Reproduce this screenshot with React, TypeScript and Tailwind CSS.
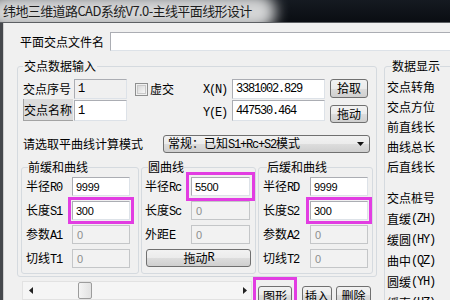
import type { ReactNode } from "react";

// Win7-ish form, fixed pixel metrics taken from the screenshot
const mono = "font-['Liberation_Mono',monospace] tracking-[-1.2px]";
const btn =
  "flex shrink-0 items-center justify-center rounded-[3px] border border-[#707070] bg-[linear-gradient(#f2f2f2,#ebebeb_50%,#dddddd_50%,#cfcfcf)] leading-none";

function Lat({ children }: { children: ReactNode }) {
  return <span className={mono}>{children}</span>;
}

function Num({ children, gray }: { children: ReactNode; gray?: boolean }) {
  return (
    <span
      className={
        gray
          ? "font-['Liberation_Sans',sans-serif] text-[11px] tracking-[-0.3px] text-[#8d8d8d]"
          : "font-['Liberation_Sans',sans-serif] text-[11px] tracking-[-0.3px]"
      }
    >
      {children}
    </span>
  );
}

function Field({
  children,
  className,
  disabled,
}: {
  children?: ReactNode;
  className: string;
  disabled?: boolean;
}) {
  return (
    <div
      className={
        disabled
          ? `flex shrink-0 items-center border border-[#c4c6c8] bg-[#f2f2f2] pl-[4px] ${className}`
          : `flex shrink-0 items-center border border-[#abadb3] border-b-[#dde2e8] border-r-[#dde2e8] pl-[3px] ${className}`
      }
    >
      {children}
    </div>
  );
}

function TitleBar() {
  return (
    <div className="relative h-[23px] overflow-hidden border-b border-[#5c5f63] bg-[linear-gradient(#151a21,#0a0d12)]">
      <div className="absolute -left-[14px] -top-[6px] h-[36px] w-[290px] rounded-full bg-[#d4d5d6] blur-[7px]" />
      <div className="relative pl-[3px] pt-[2px] text-[13px] leading-[18px] tracking-[-0.6px] text-[#1c1c1c]">
        纬地三维道路CAD系统V7.0-主线平面线形设计
      </div>
    </div>
  );
}

function Row({ label, children }: { label: ReactNode; children: ReactNode }) {
  return (
    <div className="flex h-[19px] items-center">
      {label}
      {children}
    </div>
  );
}

function Tri({ dir }: { dir: "down" | "left" | "right" }) {
  if (dir === "down")
    return (
      <svg width="7" height="4" viewBox="0 0 7 4">
        <path d="M0 0H7L3.5 4Z" fill="#111" />
      </svg>
    );
  return (
    <svg width="4" height="7" viewBox="0 0 4 7">
      <path d={dir === "left" ? "M4 0V7L0 3.5Z" : "M0 0V7L4 3.5Z"} fill="#222" />
    </svg>
  );
}

export default function App() {
  const side1 = ["交点转角", "交点方位", "前直线长", "曲线总长", "后直线长"];
  const side2: [string, string][] = [
    ["直缓", "(ZH)"],
    ["缓圆", "(HY)"],
    ["曲中", "(QZ)"],
    ["圆缓", "(YH)"],
    ["缓直", "(HZ)"],
  ];

  return (
    <div className="h-[300px] w-[450px] overflow-hidden bg-[#f0f0f0] font-['Noto_Sans_CJK_SC',sans-serif] text-[12px] leading-[14px] text-black">
      <TitleBar />
      <div className="flex h-[277px] border-l-[3px] border-[#45484c]">
        <div className="flex w-[447px] shrink-0 flex-col border-l border-[#cfcfcf]">
          {/* file name */}
          <div className="mt-[9px] flex h-[19px] items-center">
            <span className="ml-[16px] w-[90px] shrink-0">平面交点文件名</span>
            <div className="h-[19px] w-[400px] shrink-0 border border-[#abadb3] border-b-[#dde2e8] bg-white" />
          </div>

          <div className="mt-[8px] flex">
            <div className="flex w-[373px] shrink-0 flex-col">
              <fieldset className="ml-[13px] w-[360px] rounded-[3px] border border-[#d5dadf] pb-[2px]">
                <legend className="ml-[5px] px-[1px] leading-[14px]">交点数据输入</legend>

                {/* row 1 */}
                <div className="mt-[6px] flex h-[20px] items-center">
                  <span className="ml-[5px] w-[51px] shrink-0">交点序号</span>
                  <Field className="h-[20px] w-[53px] bg-[#f0f0f0]">
                    <Lat>1</Lat>
                  </Field>
                  <div className="ml-[8px] h-[13px] w-[13px] shrink-0 border border-[#8e8f8f] p-[1px]">
                    <div className="h-full w-full border border-[#c9c9c9] bg-[linear-gradient(135deg,#d8d8d8,#f7f7f7)]" />
                  </div>
                  <span className="ml-[2px] w-[24px] shrink-0">虚交</span>
                  <span className="ml-[29px] w-[24px] shrink-0">
                    <Lat>X(N)</Lat>
                  </span>
                  <Field className="ml-[5px] h-[20px] w-[93px] bg-white">
                    <Lat>3381002.829</Lat>
                  </Field>
                  <div className={`${btn} ml-[5px] -mt-[2px] h-[19px] w-[38px]`}>拾取</div>
                </div>

                {/* row 2 */}
                <div className="flex h-[24px] items-start">
                  <span className="ml-[5px] h-[22px] w-[50px] shrink-0 border-b border-l border-[#a3a3a3] bg-[#dcdcdc] pt-[4px]">
                    交点名称
                  </span>
                  <Field className="ml-[1px] mt-[1px] h-[21px] w-[53px] bg-white">
                    <Lat>1</Lat>
                  </Field>
                  <span className="ml-[76px] mt-[5px] w-[24px] shrink-0">
                    <Lat>Y(E)</Lat>
                  </span>
                  <Field className="ml-[5px] mt-[1px] h-[21px] w-[93px] bg-white">
                    <Lat>447530.464</Lat>
                  </Field>
                  <div className={`${btn} ml-[5px] mt-[6px] h-[18px] w-[38px]`}>拖动</div>
                </div>

                {/* mode */}
                <div className="mt-[12px] flex h-[18px] items-center">
                  <span className="ml-[5px] w-[140px] shrink-0">请选取平曲线计算模式</span>
                  <div className={`${btn} h-[18px] w-[207px] !justify-between pl-[4px] pr-[5px]`}>
                    <span>
                      常规：已知<Lat>S1+Rc+S2</Lat>模式
                    </span>
                    <Tri dir="down" />
                  </div>
                </div>

                {/* curve groups */}
                <div className="mt-[7px] flex">
                  <fieldset className="ml-[3px] w-[118px] shrink-0 rounded-[3px] border border-[#d5dadf] pb-[5px]">
                    <legend className="ml-[6px] leading-[14px]">前缓和曲线</legend>
                    <div className="mt-[3px] flex flex-col gap-[5px]">
                      <Row label={<span className="ml-[4px] w-[46px] shrink-0">半径<Lat>R0</Lat></span>}>
                        <Field className="h-[19px] w-[58px] bg-white"><Num>9999</Num></Field>
                      </Row>
                      <Row label={<span className="ml-[4px] w-[46px] shrink-0">长度<Lat>S1</Lat></span>}>
                        <Field className="h-[19px] w-[58px] bg-white outline-[3px] outline-offset-[1px] outline-solid outline-[#e23de2]">
                          <Num>300</Num>
                        </Field>
                      </Row>
                      <Row label={<span className="ml-[4px] w-[46px] shrink-0">参数<Lat>A1</Lat></span>}>
                        <Field disabled className="h-[19px] w-[58px]"><Num gray>0</Num></Field>
                      </Row>
                      <Row label={<span className="ml-[4px] w-[46px] shrink-0">切线<Lat>T1</Lat></span>}>
                        <Field disabled className="h-[19px] w-[58px]"><Num gray>0</Num></Field>
                      </Row>
                    </div>
                  </fieldset>

                  <fieldset className="ml-[2px] w-[115px] shrink-0 rounded-[3px] border border-[#d5dadf] pb-[5px]">
                    <legend className="ml-[6px] leading-[14px]">圆曲线</legend>
                    <div className="mt-[3px] flex flex-col gap-[5px]">
                      <Row label={<span className="ml-[3px] w-[46px] shrink-0">半径<Lat>Rc</Lat></span>}>
                        <Field className="h-[19px] w-[59px] bg-white outline-[3px] outline-offset-[2px] outline-solid outline-[#e23de2]">
                          <Num>5500</Num>
                        </Field>
                      </Row>
                      <Row label={<span className="ml-[3px] w-[46px] shrink-0">长度<Lat>Sc</Lat></span>}>
                        <Field disabled className="h-[19px] w-[59px]"><Num gray>0</Num></Field>
                      </Row>
                      <Row label={<span className="ml-[3px] w-[46px] shrink-0">外距<Lat>E</Lat></span>}>
                        <Field disabled className="h-[19px] w-[59px]"><Num gray>0</Num></Field>
                      </Row>
                      <div className={`${btn} ml-[4px] h-[18px] w-[105px]`}>
                        拖动<Lat>R</Lat>
                      </div>
                    </div>
                  </fieldset>

                  <fieldset className="ml-[2px] w-[115px] shrink-0 rounded-[3px] border border-[#d5dadf] pb-[5px]">
                    <legend className="ml-[8px] leading-[14px]">后缓和曲线</legend>
                    <div className="mt-[3px] flex flex-col gap-[5px]">
                      <Row label={<span className="ml-[4px] w-[47px] shrink-0">半径<Lat>RD</Lat></span>}>
                        <Field className="h-[19px] w-[58px] bg-white"><Num>9999</Num></Field>
                      </Row>
                      <Row label={<span className="ml-[4px] w-[47px] shrink-0">长度<Lat>S2</Lat></span>}>
                        <Field className="h-[19px] w-[58px] bg-white outline-[3px] outline-offset-[1px] outline-solid outline-[#e23de2]">
                          <Num>300</Num>
                        </Field>
                      </Row>
                      <Row label={<span className="ml-[4px] w-[47px] shrink-0">参数<Lat>A2</Lat></span>}>
                        <Field disabled className="h-[19px] w-[58px]"><Num gray>0</Num></Field>
                      </Row>
                      <Row label={<span className="ml-[4px] w-[47px] shrink-0">切线<Lat>T2</Lat></span>}>
                        <Field disabled className="h-[19px] w-[58px]"><Num gray>0</Num></Field>
                      </Row>
                    </div>
                  </fieldset>
                </div>
              </fieldset>

              {/* bottom bar */}
              <div className="flex items-start">
                <div className="ml-[18px] mt-[4px] flex h-[19px] w-[230px] shrink-0 items-center border border-[#e2e2e2] bg-[#f5f5f5]">
                  <div className="flex w-[16px] justify-center"><Tri dir="left" /></div>
                  <div className="ml-[39px] h-[17px] w-[14px] rounded-[2px] border border-[#9c9c9c] bg-[linear-gradient(90deg,#f4f4f4,#e2e2e2)]" />
                  <div className="flex-1" />
                  <div className="flex w-[12px] justify-center"><Tri dir="right" /></div>
                </div>
                <div className="ml-[1px] shrink-0 border-[3px] border-[#e23de2] px-[2px] pt-[6px]">
                  <div className={`${btn} h-[19px] w-[34px]`}>图形</div>
                </div>
                <div className={`${btn} ml-[5px] mt-[9px] h-[19px] w-[30px]`}>插入</div>
                <div className={`${btn} ml-[4px] mt-[9px] h-[19px] w-[35px]`}>删除</div>
              </div>
            </div>

            {/* data display */}
            <fieldset className="ml-[7px] w-[80px] shrink-0 rounded-[3px] border border-[#d5dadf]">
              <legend className="ml-[7px] leading-[14px]">数据显示</legend>
              <div className="mt-[4px] flex flex-col pl-[2px]">
                {side1.map((s) => (
                  <div key={s} className="flex h-[20px] items-center">
                    {s}
                  </div>
                ))}
                <div className="mt-[11px] flex h-[20px] items-center">交点桩号</div>
                {side2.map(([a, b]) => (
                  <div key={a} className="flex h-[21px] items-center whitespace-nowrap">
                    {a}
                    <Lat>{b}</Lat>
                  </div>
                ))}
              </div>
            </fieldset>
          </div>
        </div>
      </div>
    </div>
  );
}
